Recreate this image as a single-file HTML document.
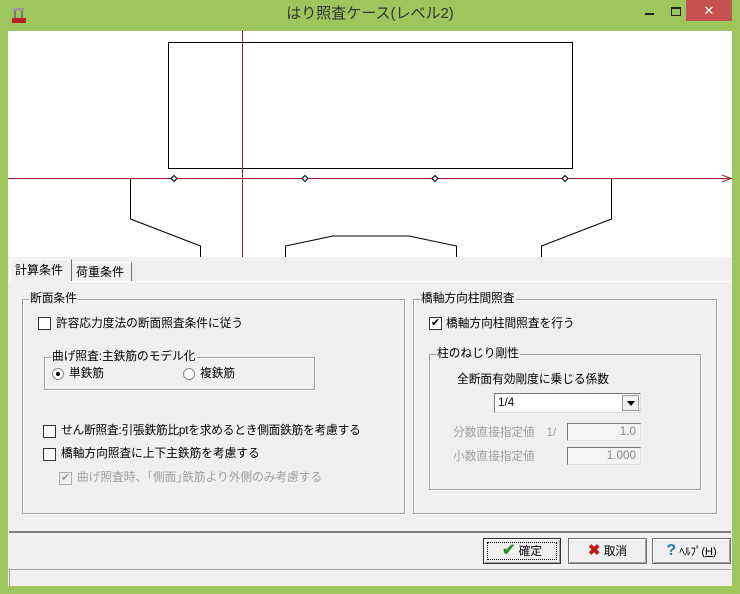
<!DOCTYPE html>
<html><head><meta charset="utf-8"><style>
*{margin:0;padding:0;box-sizing:border-box}
body{width:740px;height:594px;background:#9dc65c;position:relative;overflow:hidden;font-family:"Liberation Sans","Noto Sans CJK JP",sans-serif;font-size:11.7px;color:#000}
.a{position:absolute}
.t{white-space:nowrap;line-height:14px}
.grp{position:absolute;border:1px solid #a0a0a0;box-shadow:1px 1px 0 #fff inset, 1px 1px 0 #fff}
.lbl{position:absolute;background:#f0f0f0;padding:0 1px;top:-8px;left:6px;white-space:nowrap;line-height:14px}
.cb{position:absolute;width:13px;height:13px;background:#fff;border:1px solid #333;}
.dis{color:#a0a0a0}
.btn{position:absolute;height:26px;background:#f0f0f0;border:1px solid #707070;box-shadow:inset 1px 1px 0 #fff,inset -1px -1px 0 #a0a0a0;text-align:center;line-height:24px}
.edit{position:absolute;background:#f4f4f4;border:1px solid #7a7a7a;border-right-color:#e0e0e0;border-bottom-color:#e0e0e0;text-align:right;padding-right:4px;line-height:16px;color:#888}
</style></head><body>
<div class="a" style="left:0;top:0;width:740px;height:31px;background:#9dc65c"></div>
<div class="a" style="left:10px;top:6px;width:18px;height:18px">
<svg width="18" height="18"><rect x="3" y="2" width="11" height="3" fill="#999"/><rect x="4" y="5" width="2" height="8" fill="#777"/><rect x="11" y="5" width="2" height="8" fill="#777"/><rect x="2" y="12" width="14" height="5" fill="#b22"/></svg></div>
<div class="a t" style="left:0;width:740px;top:7px;text-align:center;font-size:15px;color:#333">はり照査ケース(レベル2)</div>
<div class="a" style="left:645px;top:13px;width:9px;height:2px;background:#222"></div>
<div class="a" style="left:671px;top:7px;width:10px;height:9px;border:1px solid #222;border-top-width:2px"></div>
<div class="a" style="left:686px;top:0;width:46px;height:21px;background:#c75050;color:#fff;text-align:center;line-height:21px;font-size:13px">✕</div>
<div class="a" style="left:8px;top:31px;width:724px;height:555px;background:#f0f0f0"></div>
<svg class="a" style="left:8px;top:31px" width="724" height="226">
<rect width="724" height="226" fill="#fff"/>
<g transform="translate(-8,-31)" fill="none" stroke="#000" stroke-width="1">
<rect x="168.5" y="42.5" width="404" height="126"/>
<polyline points="130.5,178 130.5,219 200.5,246 200.5,257"/>
<polyline points="285.5,257 285.5,246 333,236 409,236 456.5,246 456.5,257"/>
<polyline points="611.5,178 611.5,219 541.5,246 541.5,257"/>
<line x1="8" y1="178.5" x2="732" y2="178.5" stroke="#a01830"/>
<line x1="242.5" y1="31" x2="242.5" y2="257" stroke="#a01830"/>
<polyline points="722,175 731,178.5 722,182" stroke="#a01830"/>
<g fill="#fff"><path d="M171 178.5l3-3 3 3-3 3z"/><path d="M302 178.5l3-3 3 3-3 3z"/><path d="M432 178.5l3-3 3 3-3 3z"/><path d="M562 178.5l3-3 3 3-3 3z"/></g>
</g></svg>
<!-- tabs -->
<div class="a" style="left:10px;top:259px;width:62px;height:23px;border-top:1px solid #fff;border-left:1px solid #fff;border-right:1px solid #707070;background:#f0f0f0"></div>
<div class="a t" style="left:15px;top:263px;font-size:12px">計算条件</div>
<div class="a" style="left:73px;top:262px;width:59px;height:19px;border-top:1px solid #fff;border-right:1px solid #707070"></div>
<div class="a t" style="left:76px;top:265px;font-size:12px">荷重条件</div>
<div class="a" style="left:9px;top:281px;width:722px;height:252px;border-top:1px solid #fff;border-bottom:2px solid #808080"></div>
<div class="a" style="left:11px;top:281px;width:60px;height:2px;background:#f0f0f0"></div>
<!-- left group -->
<div class="grp" style="left:22px;top:299px;width:383px;height:215px"><div class="lbl">断面条件</div></div>
<div class="cb" style="left:38px;top:317px"></div>
<div class="a t" style="left:56px;top:317px">許容応力度法の断面照査条件に従う</div>
<div class="grp" style="left:44px;top:357px;width:271px;height:33px"><div class="lbl">曲げ照査:主鉄筋のモデル化</div></div>
<div class="a" style="left:52px;top:368px;width:12px;height:12px;border-radius:50%;background:#fff;border:1px solid #888"></div>
<div class="a" style="left:56px;top:372px;width:4px;height:4px;border-radius:50%;background:#000"></div>
<div class="a t" style="left:69px;top:367px">単鉄筋</div>
<div class="a" style="left:183px;top:368px;width:12px;height:12px;border-radius:50%;background:#fff;border:1px solid #888"></div>
<div class="a t" style="left:200px;top:367px">複鉄筋</div>
<div class="cb" style="left:43px;top:425px"></div>
<div class="a t" style="left:61px;top:424px;letter-spacing:-0.2px">せん断照査:引張鉄筋比ptを求めるとき側面鉄筋を考慮する</div>
<div class="cb" style="left:43px;top:448px"></div>
<div class="a t" style="left:61px;top:447px">橋軸方向照査に上下主鉄筋を考慮する</div>
<div class="cb" style="left:59px;top:472px;border-color:#aaa;background:#f0f0f0;color:#999;font-size:11px;line-height:11px;text-align:center">✔</div>
<div class="a t dis" style="left:77px;top:471px">曲げ照査時、｢側面｣鉄筋より外側のみ考慮する</div>
<!-- right group -->
<div class="grp" style="left:413px;top:299px;width:304px;height:215px"><div class="lbl">橋軸方向柱間照査</div></div>
<div class="cb" style="left:429px;top:317px;font-size:11px;line-height:11px;text-align:center">✔</div>
<div class="a t" style="left:446px;top:317px">橋軸方向柱間照査を行う</div>
<div class="grp" style="left:429px;top:354px;width:272px;height:136px"><div class="lbl">柱のねじり剛性</div></div>
<div class="a t" style="left:457px;top:373px">全断面有効剛度に乗じる係数</div>
<div class="a" style="left:494px;top:393px;width:147px;height:20px;background:#fff;border:1px solid #7a7a7a;border-right-color:#ddd;border-bottom-color:#ddd"></div>
<div class="a t" style="left:498px;top:396px">1/4</div>
<div class="a" style="left:622px;top:395px;width:17px;height:16px;background:#f0f0f0;border:1px solid #999"></div>
<div class="a" style="left:627px;top:401px;width:0;height:0;border-left:4px solid transparent;border-right:4px solid transparent;border-top:5px solid #000"></div>
<div class="a t dis" style="left:453px;top:426px">分数直接指定値　1/</div>
<div class="edit" style="left:567px;top:423px;width:74px;height:18px">1.0</div>
<div class="a t dis" style="left:453px;top:450px">小数直接指定値</div>
<div class="edit" style="left:567px;top:447px;width:74px;height:18px">1.000</div>
<!-- buttons -->
<div class="btn" style="left:483px;top:538px;width:78px;border-color:#333"><div style="position:absolute;inset:3px;border:1px dotted #000"></div><span style="color:#2a8a2a;font-size:16px;font-weight:bold">✔</span> 確定</div>
<div class="btn" style="left:568px;top:538px;width:79px"><span style="color:#c01818;font-size:15px;font-weight:bold">✖</span> 取消</div>
<div class="btn" style="left:652px;top:538px;width:79px"><span style="color:#1a7fa0;font-size:16px;font-weight:bold">?</span> <span style="font-size:11px">ﾍﾙﾌﾟ(<u>H</u>)</span></div>
<div class="a" style="left:9px;top:569px;width:722px;height:17px;border-top:1px solid #a0a0a0;border-left:1px solid #a0a0a0"></div>
</body></html>
